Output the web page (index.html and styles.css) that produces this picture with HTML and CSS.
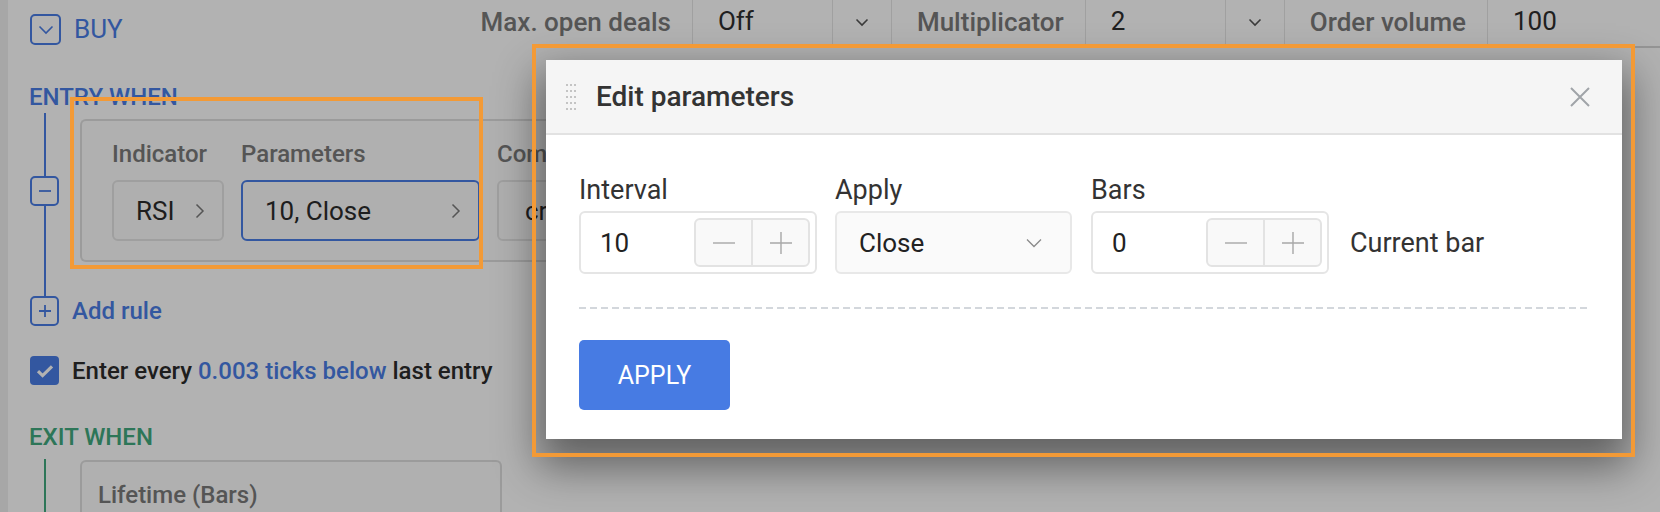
FILE: index.html
```html
<!DOCTYPE html>
<html lang="en">
<head>
<meta charset="utf-8">
<title>Strategy editor – Edit parameters</title>
<link rel="stylesheet" href="styles.css">
</head>
<body>
<div class="app">
  <aside class="rail"></aside>
  <main class="content">
    <header class="topbar">
      <button class="buy-toggle" type="button">
        <span class="sq-icon"><svg width="16" height="10" viewBox="0 0 16 10"><path d="M1.5 1.5l6.5 6.5 6.5-6.5" fill="none" stroke="currentColor" stroke-width="1.6"/></svg></span>
        <span>BUY</span>
      </button>
      <div class="settings">
        <span class="set-label first">Max. open deals</span>
        <div class="set-box">
          <span class="set-val">Off</span>
          <span class="set-caret"><svg width="14" height="9" viewBox="0 0 14 9"><path d="M1.5 1.5l5.5 5.5 5.5-5.5" fill="none" stroke="currentColor" stroke-width="1.6"/></svg></span>
        </div>
        <span class="set-label">Multiplicator</span>
        <div class="set-box">
          <span class="set-val">2</span>
          <span class="set-caret"><svg width="14" height="9" viewBox="0 0 14 9"><path d="M1.5 1.5l5.5 5.5 5.5-5.5" fill="none" stroke="currentColor" stroke-width="1.6"/></svg></span>
        </div>
        <span class="set-label">Order volume</span>
        <div class="set-box last">
          <span class="set-val">100</span>
        </div>
      </div>
    </header>

    <section class="strategy">
      <h3 class="section-title entry">ENTRY WHEN</h3>
      <div class="rules">
        <div class="rule-row">
          <button class="tree-btn" type="button"><svg width="14" height="14" viewBox="0 0 14 14"><path d="M1 7h12" stroke="currentColor" stroke-width="1.8"/></svg></button>
          <div class="rule-card">
            <div class="field">
              <span class="field-label">Indicator</span>
              <div class="field-box w-ind"><span>RSI</span><svg class="chev-r" width="10" height="16" viewBox="0 0 10 16"><path d="M1.5 1.5l6.5 6.5-6.5 6.5" fill="none" stroke="currentColor" stroke-width="1.5"/></svg></div>
            </div>
            <div class="field">
              <span class="field-label">Parameters</span>
              <div class="field-box w-par active"><span>10, Close</span><svg class="chev-r" width="10" height="16" viewBox="0 0 10 16"><path d="M1.5 1.5l6.5 6.5-6.5 6.5" fill="none" stroke="currentColor" stroke-width="1.5"/></svg></div>
            </div>
            <div class="field">
              <span class="field-label">Com</span>
              <div class="field-box w-cmp"><span>cr</span></div>
            </div>
          </div>
        </div>
        <div class="add-row">
          <button class="tree-btn" type="button"><svg width="14" height="14" viewBox="0 0 14 14"><path d="M1 7h12M7 1v12" stroke="currentColor" stroke-width="1.8"/></svg></button>
          <span class="add-text">Add rule</span>
        </div>
      </div>

      <label class="check-row">
        <span class="checkbox"><svg width="18" height="14" viewBox="0 0 18 14"><path d="M2 7.2l4.6 4.4L16 2.4" fill="none" stroke="#fff" stroke-width="3.2"/></svg></span>
        <span class="check-text">Enter every <span class="link">0.003 ticks below</span> last entry</span>
      </label>

      <h3 class="section-title exit">EXIT WHEN</h3>
      <div class="exit-rules">
        <div class="exit-card"><span class="field-label">Lifetime (Bars)</span></div>
      </div>
    </section>
  </main>
</div>

<div class="overlay"></div>

<div class="modal" role="dialog" aria-label="Edit parameters">
  <div class="modal-head">
    <svg class="drag" width="10" height="26" viewBox="0 0 10 26">
      <g fill="#c4c4c4">
        <rect x="0" y="0" width="2" height="2"/><rect x="4" y="0" width="2" height="2"/><rect x="8" y="0" width="2" height="2"/>
        <rect x="0" y="6" width="2" height="2"/><rect x="4" y="6" width="2" height="2"/><rect x="8" y="6" width="2" height="2"/>
        <rect x="0" y="12" width="2" height="2"/><rect x="4" y="12" width="2" height="2"/><rect x="8" y="12" width="2" height="2"/>
        <rect x="0" y="18" width="2" height="2"/><rect x="4" y="18" width="2" height="2"/><rect x="8" y="18" width="2" height="2"/>
        <rect x="0" y="24" width="2" height="2"/><rect x="4" y="24" width="2" height="2"/><rect x="8" y="24" width="2" height="2"/>
      </g>
    </svg>
    <h2 class="modal-title">Edit parameters</h2>
    <button class="close" type="button" aria-label="Close"><svg width="20" height="20" viewBox="0 0 20 20"><path d="M1 1l18 18M19 1L1 19" stroke="currentColor" stroke-width="2"/></svg></button>
  </div>
  <div class="modal-body">
    <div class="param-row">
      <div class="pfield">
        <span class="plabel">Interval</span>
        <div class="num-input">
          <span class="num-val">10</span>
          <div class="stepper">
            <span class="step"><svg width="24" height="24" viewBox="0 0 24 24"><path d="M1 12h22" stroke="currentColor" stroke-width="1.4"/></svg></span>
            <span class="step"><svg width="24" height="24" viewBox="0 0 24 24"><path d="M1 12h22M12 1v22" stroke="currentColor" stroke-width="1.4"/></svg></span>
          </div>
        </div>
      </div>
      <div class="pfield">
        <span class="plabel">Apply</span>
        <div class="select">
          <span class="num-val">Close</span>
          <svg width="16" height="10" viewBox="0 0 16 10"><path d="M1 1.5l7 7 7-7" fill="none" stroke="currentColor" stroke-width="1.3"/></svg>
        </div>
      </div>
      <div class="pfield">
        <span class="plabel">Bars</span>
        <div class="num-input">
          <span class="num-val">0</span>
          <div class="stepper">
            <span class="step"><svg width="24" height="24" viewBox="0 0 24 24"><path d="M1 12h22" stroke="currentColor" stroke-width="1.4"/></svg></span>
            <span class="step"><svg width="24" height="24" viewBox="0 0 24 24"><path d="M1 12h22M12 1v22" stroke="currentColor" stroke-width="1.4"/></svg></span>
          </div>
        </div>
      </div>
      <span class="hint">Current bar</span>
    </div>
    <div class="dashed"></div>
    <div class="modal-foot">
      <button class="apply-btn" type="button">APPLY</button>
    </div>
  </div>
</div>

<div class="hl hl-rule"></div>
<div class="hl hl-modal"></div>
</body>
</html>
```

FILE: styles.css
```css
* { box-sizing: border-box; }

body {
  margin: 0;
  width: 1660px;
  height: 512px;
  overflow: hidden;
  position: relative;
  background: #fff;
  color: #2c2c2c;
  font-family: Roboto, "Liberation Sans", sans-serif;
}

button { font-family: inherit; }

.app { display: flex; height: 100%; overflow: hidden; }
.rail { width: 8px; flex: none; background: #efefef; }
.content { flex: 1; min-width: 0; display: flex; flex-direction: column; overflow: hidden; }

/* top bar */
.topbar { display: flex; align-items: flex-start; height: 48px; flex: none; }
.buy-toggle {
  display: flex; align-items: center; gap: 13px;
  margin: 14px 0 0 22px; padding: 0;
  background: none; border: 0;
  color: #4a7de5; font-size: 26px; line-height: 31px;
}
.sq-icon {
  width: 31px; height: 31px;
  border: 2px solid #4a7de5; border-radius: 5px;
  display: flex; align-items: center; justify-content: center;
}
.settings { margin-left: auto; display: flex; height: 48px; }
.set-label {
  font-size: 26px; font-weight: 500; color: #7a7a7a;
  line-height: 28px; padding: 8px 21px 0 25px; white-space: nowrap;
}
.set-label.first { padding-left: 0; }
.set-box {
  display: flex; height: 48px;
  border: 1px solid #e6e6e6; border-top: 0; border-bottom: 2px solid #d6d6d6;
}
.set-val {
  width: 139px; padding: 7px 0 0 25px;
  font-size: 26px; line-height: 28px; color: #2e2e2e;
}
.set-caret {
  width: 59px; border-left: 1px solid #e6e6e6;
  display: flex; justify-content: center; padding-top: 18px; color: #555;
}
.set-box.last { width: 173px; border-right: 0; }

/* strategy */
.strategy { padding-left: 22px; display: flex; flex-direction: column; }
.section-title {
  margin: 35px 0 0 -1px; font-size: 24px; font-weight: 500; line-height: 28px;
}
.section-title.entry { color: #4a7de5; }
.section-title.exit { color: #41a97e; margin-top: 38px; }

.rules { position: relative; margin-top: 2px; padding-top: 6px; }
.rules::before {
  content: ""; position: absolute; left: 14px; top: 0; bottom: 29px;
  width: 2px; background: #4a7de5;
}
.rule-row { display: flex; align-items: center; gap: 21px; }
.tree-btn {
  position: relative; z-index: 1; flex: none;
  width: 29px; height: 30px; padding: 0;
  border: 2px solid #4a7de5; border-radius: 5px; background: #fff; color: #4a7de5;
  display: flex; align-items: center; justify-content: center;
}
.rule-card {
  width: 468px; flex: none; overflow: hidden;
  display: flex; gap: 17px;
  padding: 20px 30px 19px;
  border: 2px solid #dedede; border-right: 0; border-radius: 6px 0 0 6px; background: #fcfcfc;
}
.field { display: flex; flex-direction: column; gap: 13px; flex: none; }
.field-label { font-size: 24px; font-weight: 500; line-height: 26px; color: #7a7a7a; white-space: nowrap; }
.field-box {
  height: 61px; display: flex; align-items: center; justify-content: space-between;
  padding: 0 17px 0 22px;
  border: 2px solid #e4e4e4; border-radius: 6px; background: #fbfbfb;
  font-size: 26px; color: #2c2c2c; white-space: nowrap;
}
.field-box.active { border-color: #4a7de5; }
.w-ind { width: 112px; }
.w-par { width: 239px; }
.w-cmp { width: 120px; padding-left: 26px; }
.chev-r { color: #7a7a7a; flex: none; }

.add-row { display: flex; align-items: center; gap: 13px; margin-top: 34px; }
.add-text { font-size: 24px; font-weight: 500; color: #4a7de5; line-height: 28px; }

.check-row { display: flex; align-items: center; gap: 13px; margin-top: 30px; }
.checkbox {
  width: 29px; height: 29px; border-radius: 4px; background: #4a7de5;
  display: flex; align-items: center; justify-content: center;
}
.check-text { font-size: 24px; font-weight: 500; line-height: 28px; color: #2c2c2c; }
.link { color: #4a7de5; }

.exit-rules { position: relative; margin-top: 8px; padding: 1px 0 0 50px; height: 55px; }
.exit-rules::before {
  content: ""; position: absolute; left: 14px; top: 0; bottom: 0;
  width: 2px; background: #41a97e;
}
.exit-card {
  width: 422px; height: 54px;
  padding: 20px 16px 0;
  border: 2px solid #dedede; border-bottom: 0; border-radius: 6px 6px 0 0; background: #fcfcfc;
}

/* overlay */
.overlay { position: absolute; inset: 0; background: rgba(0, 0, 0, 0.3); z-index: 5; }

/* modal */
.modal {
  position: absolute; left: 546px; top: 60px; width: 1076px;
  background: #fff; z-index: 10;
  box-shadow: 0 20px 40px 8px rgba(0, 0, 0, 0.45);
}
.modal-head {
  height: 75px; display: flex; align-items: center;
  padding: 0 32px 0 20px;
  background: #f5f5f5; border-bottom: 2px solid #e2e2e2;
}
.drag { flex: none; }
.modal-title { margin: 0 0 0 20px; font-size: 28px; font-weight: 500; color: #333; }
.close {
  margin-left: auto; padding: 0; background: none; border: 0;
  color: #a0a4a8; display: flex;
}
.modal-body { padding: 39px 32px 29px 33px; }
.param-row { display: flex; align-items: flex-end; }
.pfield { display: flex; flex-direction: column; gap: 5px; margin-right: 18px; }
.pfield:nth-child(2) { margin-right: 19px; }
.pfield:nth-child(3) { margin-right: 21px; }
.plabel { font-size: 27px; line-height: 32px; color: #333; }
.num-input {
  width: 238px; height: 63px; display: flex; align-items: center;
  padding: 0 5px 0 19px;
  border: 2px solid #e5e5e5; border-radius: 6px; background: #fff;
}
.num-val { font-size: 26px; color: #222; }
.stepper {
  margin-left: auto; width: 116px; height: 49px; display: flex;
  border: 2px solid #e3e3e3; border-radius: 6px; background: #f9f9f9;
}
.step { flex: 1; display: flex; align-items: center; justify-content: center; color: #a8a8a8; }
.step + .step { border-left: 2px solid #e3e3e3; }
.select {
  width: 237px; height: 63px; display: flex; align-items: center; justify-content: space-between;
  padding: 0 28px 0 22px;
  border: 2px solid #e8e8e8; border-radius: 6px; background: #fafafa; color: #8a8a8a;
}
.hint { height: 63px; display: flex; align-items: center; font-size: 27px; color: #333; }
.dashed {
  margin-top: 33px; height: 2px;
  background: repeating-linear-gradient(90deg, #d3d7dc 0 7px, transparent 7px 11px);
}
.modal-foot { padding-top: 31px; }
.apply-btn {
  width: 151px; height: 70px; border: 0; border-radius: 5px;
  background: #477be3; color: #fff; font-size: 25px; display: block;
}

/* annotation frames */
.hl { position: absolute; border: 4px solid #f39a36; z-index: 20; pointer-events: none; }
.hl-rule { left: 70px; top: 97px; width: 413px; height: 172px; }
.hl-modal { left: 532px; top: 44px; width: 1103px; height: 413px; }
```
